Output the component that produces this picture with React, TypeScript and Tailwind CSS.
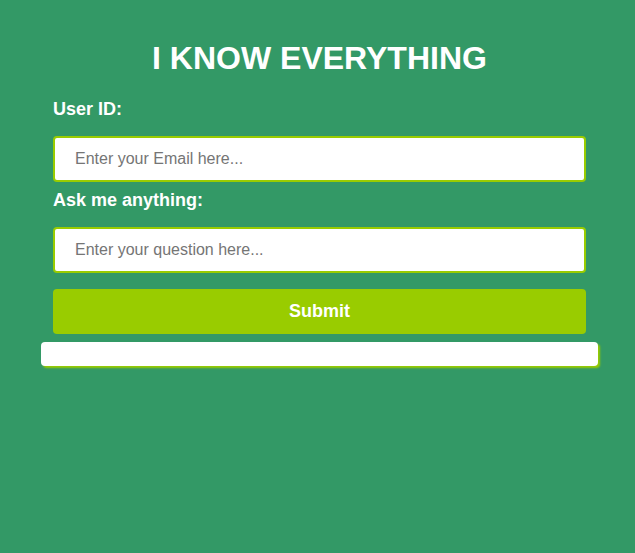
export default function App() {
  const label = "block pt-1.5 text-lg leading-6 font-bold";
  const input =
    "mt-[15px] block h-[46px] w-full rounded border-2 border-[#99cc00] bg-white px-5 text-base text-black placeholder:text-[#757575] outline-none";
  return (
    <main className="min-h-screen bg-[#339966] pt-9 pr-[37px] pl-[41px] font-['Liberation_Sans',Arial,sans-serif] text-white">
      <form className="px-3" onSubmit={(e) => e.preventDefault()}>
        <h1 className="mb-[11px] text-center text-[32px] leading-11 font-bold">I KNOW EVERYTHING</h1>
        <label htmlFor="user" className={label}>User ID:</label>
        <input id="user" type="text" placeholder="Enter your Email here..." className={input} />
        <label htmlFor="question" className={label}>Ask me anything:</label>
        <input id="question" type="text" placeholder="Enter your question here..." className={input} />
        <button type="submit" className="mt-4 block h-[45px] w-full rounded bg-[#99cc00] pb-0.5 text-lg font-bold">Submit</button>
      </form>
      <output aria-label="Answer" className="mt-2 block h-6 rounded bg-white text-black shadow-[2px_2px_2px_#99cc00]" />
    </main>
  );
}
